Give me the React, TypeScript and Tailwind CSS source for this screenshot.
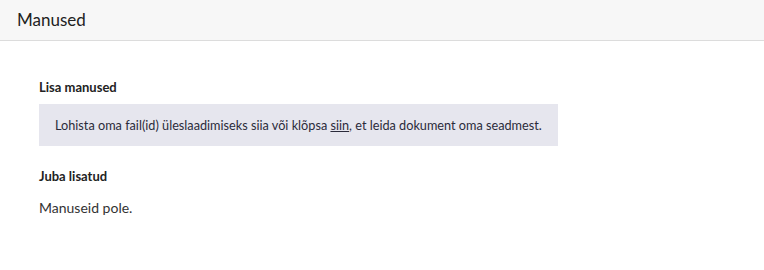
export default function App() {
  return (
    <div className="w-[764px] h-[270px] bg-white" style={{ fontFamily: "Lato, 'Liberation Sans', sans-serif" }}>
      <div className="h-[41px] bg-[#f7f7f7] border-b border-[#dcdcdc] flex items-center px-[17px] pb-[2px]">
        <h1 className="text-[17px] text-[#222] leading-none">Manused</h1>
      </div>
      <div className="pl-[39px] pt-[38px]">
        <div className="text-[13px] font-bold text-[#222] leading-[16px]">Lisa manused</div>
        <div className="mt-[9px] inline-block bg-[#e6e6ee] px-4 py-3 text-[12.7px] leading-[18px] text-[#2b2b3b]">
          Lohista oma fail(id) üleslaadimiseks siia või klõpsa <span className="underline">siin</span>, et leida dokument oma seadmest.
        </div>
        <div className="mt-[22px] text-[13px] font-bold text-[#222] leading-[16px]">Juba lisatud</div>
        <div className="mt-[14px] text-[14px] text-[#333] leading-[20px]">Manuseid pole.</div>
      </div>
    </div>
  );
}
